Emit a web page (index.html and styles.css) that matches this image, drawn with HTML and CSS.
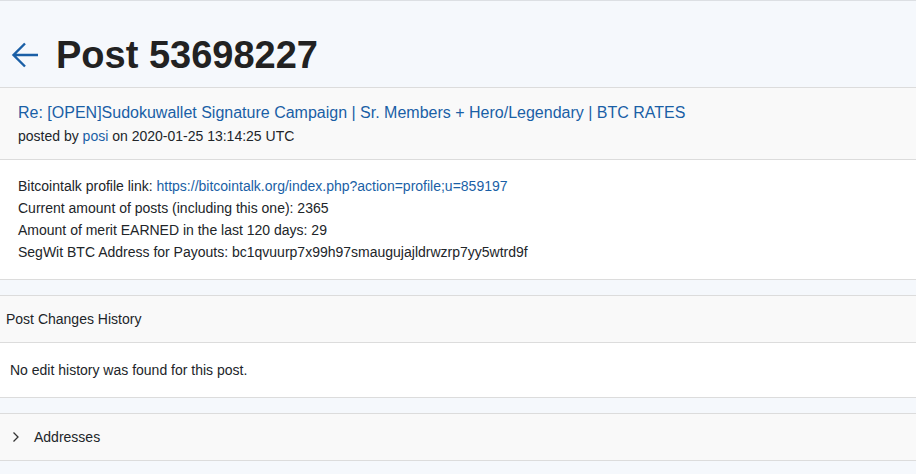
FILE: index.html
```html
<!DOCTYPE html>
<html lang="en">
<head>
<meta charset="utf-8">
<title>Post 53698227</title>
<link rel="stylesheet" href="styles.css">
</head>
<body>
  <header class="page-header">
    <a class="back" href="#" aria-label="Back">
      <svg width="30" height="30" viewBox="0 0 30 30" aria-hidden="true">
        <path d="M28 15H3.5M15 3.5L3.5 15L15 26.5" fill="none" stroke="currentColor" stroke-width="2.4"/>
      </svg>
    </a>
    <h1 class="page-title">Post 53698227</h1>
  </header>

  <section class="card">
    <div class="card-head post-head">
      <a class="post-topic" href="#">Re: [OPEN]Sudokuwallet Signature Campaign | Sr. Members + Hero/Legendary | BTC RATES</a>
      <div class="post-meta">posted by <a href="#">posi</a> on 2020-01-25 13:14:25 UTC</div>
    </div>
    <div class="card-body post-body">
      <div>Bitcointalk profile link: <a href="#">https://bitcointalk.org/index.php?action=profile;u=859197</a></div>
      <div>Current amount of posts (including this one): 2365</div>
      <div>Amount of merit EARNED in the last 120 days: 29</div>
      <div>SegWit BTC Address for Payouts: bc1qvuurp7x99h97smaugujajldrwzrp7yy5wtrd9f</div>
    </div>
  </section>

  <section class="card">
    <div class="card-head panel-head">Post Changes History</div>
    <div class="card-body panel-body">No edit history was found for this post.</div>
  </section>

  <section class="card">
    <div class="card-head panel-head toggle">
      <svg class="chevron" width="8" height="12" viewBox="0 0 8 12" aria-hidden="true">
        <path d="M1.5 1.5L6 6L1.5 10.5" fill="none" stroke="currentColor" stroke-width="1.3"/>
      </svg>
      <span>Addresses</span>
    </div>
  </section>
</body>
</html>
```

FILE: styles.css
```css
html, body {
  margin: 0;
  padding: 0;
}

body {
  background: #f5f8fc;
  border-top: 1px solid #dcdfe3;
  font-family: "Liberation Sans", Arial, sans-serif;
  color: #212529;
  font-size: 14px;
}

a {
  color: #1a5fa6;
  text-decoration: none;
}

.page-header {
  display: flex;
  align-items: center;
  height: 86px;
  padding: 22px 0 0 10px;
  box-sizing: border-box;
}

.back {
  display: flex;
  color: #1a5fa6;
  margin-right: 16px;
}

.page-title {
  margin: 0;
  font-size: 38px;
  line-height: 44px;
  font-weight: 700;
  color: #222;
}

.card {
  border-top: 1px solid #dcdcdc;
  border-bottom: 1px solid #dcdcdc;
  margin-bottom: 15px;
}

.card-head {
  background: #f9f9f9;
}

.card-body {
  background: #fff;
  border-top: 1px solid #dcdcdc;
}

.post-head {
  padding: 13px 18px 12px;
}

.post-topic {
  display: block;
  font-size: 16px;
  line-height: 24px;
}

.post-meta {
  line-height: 22px;
}

.post-body {
  padding: 15px 18px 16px;
  line-height: 22px;
}

.panel-head {
  padding: 12px 6px;
  line-height: 22px;
}

.panel-body {
  padding: 16px 10px;
  line-height: 22px;
}

.toggle {
  display: flex;
  align-items: center;
  padding-left: 12px;
}

.chevron {
  color: #333;
  margin-right: 14px;
}
```
